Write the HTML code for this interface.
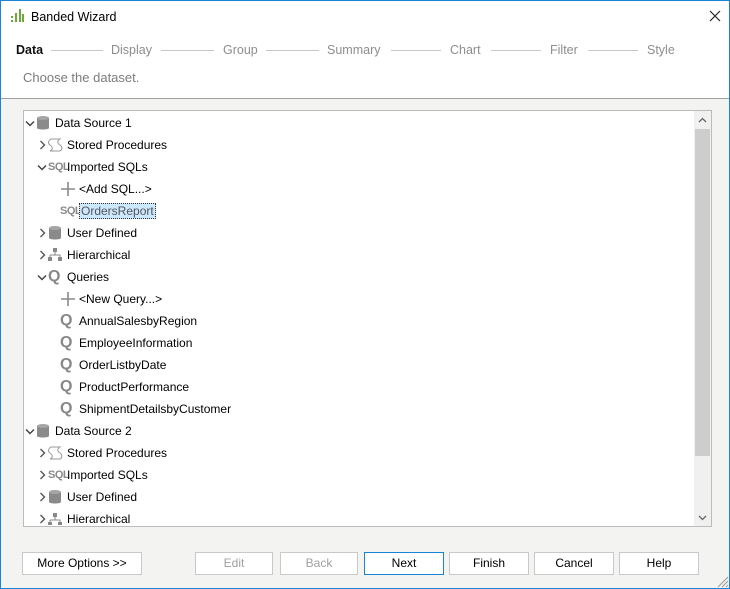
<!DOCTYPE html><html><head><style>
body{margin:0;width:730px;height:589px;overflow:hidden;font-family:"Liberation Sans",sans-serif;font-size:12px;color:#000}
.win{position:absolute;left:0;top:0;width:728px;height:587px;border:1px solid #1883d7;background:#f3f3f2}
.title{position:absolute;left:0;top:0;width:728px;height:31px;background:#fff}
.hdr{position:absolute;left:0;top:31px;width:728px;height:66px;background:#fff;border-bottom:1px solid #a0a0a0}
.s{position:absolute;top:11px;font-size:12.5px;color:#8d8d8d}
.l{position:absolute;top:18px;height:1px;background:#c8c8c8}
.tree{position:absolute;left:22px;top:109px;width:687px;height:415px;background:#fff;border:1px solid #bcbcbc;overflow:hidden}
.r{position:absolute;height:22px;display:flex;align-items:center;white-space:nowrap}
.ar{position:absolute}
.sb{position:absolute;right:0;top:0;width:17px;height:415px;background:#f0f0f0}
.btn{position:absolute;top:551px;height:21px;border:1px solid #c9c9c9;background:#fff;text-align:center;line-height:21px;font-size:12px}
.ic{display:inline-flex;width:19px;align-items:center;justify-content:flex-start}
</style></head><body><div class="win">
<div class="title">
<svg style="position:absolute;left:10px;top:7px" width="14" height="16"><g fill="#6aaa3a"><rect x="0" y="8" width="2" height="2"/><rect x="0" y="12" width="2" height="2"/><rect x="4" y="5" width="2" height="9"/><rect x="8" y="1" width="2" height="13"/><rect x="11" y="6" width="2" height="8"/></g></svg>
<div style="position:absolute;left:30px;top:9px;font-size:12.5px">Banded Wizard</div>
<svg style="position:absolute;left:708px;top:9px" width="12" height="12"><path d="M1 1L11 11M11 1L1 11" stroke="#222" stroke-width="1.2"/></svg>
</div>
<div class="hdr">
<div class="s" style="left:15px;color:#111;font-weight:bold">Data</div>
<div class="l" style="left:50px;width:52px"></div><div class="s" style="left:110px">Display</div>
<div class="l" style="left:160px;width:53px"></div><div class="s" style="left:222px">Group</div>
<div class="l" style="left:265px;width:53px"></div><div class="s" style="left:326px">Summary</div>
<div class="l" style="left:390px;width:50px"></div><div class="s" style="left:449px">Chart</div>
<div class="l" style="left:490px;width:50px"></div><div class="s" style="left:549px">Filter</div>
<div class="l" style="left:587px;width:50px"></div><div class="s" style="left:646px">Style</div>
<div style="position:absolute;left:22px;top:38px;font-size:13px;color:#7c7c7c">Choose the dataset.</div>
</div>
<div class="tree">
<div class="sb">
<svg style="position:absolute;left:4px;top:6px" width="9" height="6"><path d="M1 5L4.5 1.5L8 5" stroke="#666" stroke-width="1.3" fill="none"/></svg>
<div style="position:absolute;left:1px;top:18px;width:15px;height:327px;background:#cdcdcd"></div>
<svg style="position:absolute;left:4px;top:404px" width="9" height="6"><path d="M1 1L4.5 4.5L8 1" stroke="#666" stroke-width="1.3" fill="none"/></svg></div>
</div>
<div id="rows"></div>
<div class="btn" style="left:21px;width:118px">More Options &gt;&gt;</div>
<div class="btn" style="left:194px;width:76px;color:#a0a0a0">Edit</div>
<div class="btn" style="left:279px;width:76px;color:#a0a0a0">Back</div>
<div class="btn" style="left:363px;width:78px;border-color:#1883d7">Next</div>
<div class="btn" style="left:448px;width:78px">Finish</div>
<div class="btn" style="left:533px;width:78px">Cancel</div>
<div class="btn" style="left:618px;width:78px">Help</div>
<svg style="position:absolute;left:716px;top:575px" width="12" height="12"><path d="M11 1L1 11M11 5L5 11M11 9L9 11" stroke="#999"/></svg>
</div>
<script>
var db='<svg width="14" height="16"><path d="M1 3v10c0 2 12 2 12 0V3" fill="#8a8a8a"/><ellipse cx="7" cy="3" rx="6" ry="2" fill="#a5a5a5"/></svg>';
var sp='<svg width="16" height="16"><path d="M3 2h9c-3 2-3 4 0 6s2 6-1 6H2c3-1 3-4 0-6S1 3 3 2z" fill="none" stroke="#999"/></svg>';
var sql='<span style="font-weight:bold;color:#8a8a8a;font-size:11px;letter-spacing:-0.5px">SQL</span>';
var plus='<svg width="16" height="16"><path d="M8 1v14M1 8h14" stroke="#888" stroke-width="1.6"/></svg>';
var hi='<svg width="14" height="16"><g fill="#888"><rect x="5" y="1" width="4" height="4"/><rect x="0" y="10" width="4" height="4"/><rect x="10" y="10" width="4" height="4"/><path d="M7 5v3M2 8h10v2M2 8v2" stroke="#888" fill="none"/></g></svg>';
var q='<span style="font-weight:bold;color:#888;font-size:16px;line-height:16px">Q</span>';
var ud='<svg width="14" height="16"><path d="M1 3v10c0 2 12 2 12 0V3" fill="#8a8a8a"/><ellipse cx="7" cy="3" rx="6" ry="2" fill="#a5a5a5"/></svg>';
var R=[[0,'v',db,'Data Source 1'],[1,'>',sp,'Stored Procedures'],[1,'v',sql,'Imported SQLs'],[2,'',plus,'&lt;Add SQL...&gt;'],[2,'',sql,'OrdersReport',1],[1,'>',ud,'User Defined'],[1,'>',hi,'Hierarchical'],[1,'v',q,'Queries'],[2,'',plus,'&lt;New Query...&gt;'],[2,'',q,'AnnualSalesbyRegion'],[2,'',q,'EmployeeInformation'],[2,'',q,'OrderListbyDate'],[2,'',q,'ProductPerformance'],[2,'',q,'ShipmentDetailsbyCustomer'],[0,'v',db,'Data Source 2'],[1,'>',sp,'Stored Procedures'],[1,'>',sql,'Imported SQLs'],[1,'>',ud,'User Defined'],[1,'>',hi,'Hierarchical']];
var h='';R.forEach(function(r,i){var y=111+i*22,x=24+r[0]*12;
var a=r[1]=='v'?'<svg class="ar" style="left:'+(x)+'px;top:'+(y+8)+'px" width="10" height="7"><path d="M1 1.5L5 5.5L9 1.5" stroke="#444" stroke-width="1.5" fill="none"/></svg>':r[1]=='>'?'<svg class="ar" style="left:'+(x+2)+'px;top:'+(y+6)+'px" width="7" height="10"><path d="M1.5 1L5.5 5L1.5 9" stroke="#555" stroke-width="1.4" fill="none"/></svg>':'';
h+=a+'<div class="r" style="left:'+(x+11)+'px;top:'+y+'px;'+(y+22>524?'height:'+(524-y)+'px;overflow:hidden;align-items:flex-start;padding-top:4px;box-sizing:border-box':'')+'"><span class="ic">'+r[2]+'</span>'+(r[4]?'<span style="background:#cce8ff;border:1px dotted #333;padding:0 1px;color:#555">'+r[3]+'</span>':r[3])+'</div>';});
document.getElementById('rows').innerHTML=h;
</script>
</body></html>
